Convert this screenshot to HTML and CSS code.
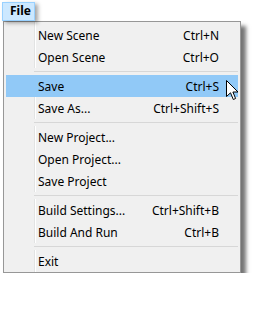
FILE: index.html
```html
<!DOCTYPE html>
<html lang="en">
<head>
  <meta charset="UTF-8" />
  <title>File menu</title>
  <link rel="stylesheet" href="styles.css">
</head>
<body>

<div class="menubar">
  <div class="menu-title">File</div>
</div>

<div class="menu">
  <div class="item"><span>New Scene</span><span class="key">Ctrl+N</span></div>
  <div class="item"><span>Open Scene</span><span class="key">Ctrl+O</span></div>
  <div class="sep"></div>
  <div class="item active"><span>Save</span><span class="key">Ctrl+S</span>
    <svg class="cursor" width="13" height="21" viewBox="0 0 13 21">
      <path d="M0.5 0.5 L0.5 16.5 L4.5 12.8 L7.3 19.5 L9.6 18.5 L6.9 12 L12 12 Z" fill="#fff" stroke="#000" stroke-width="1" stroke-linejoin="miter"/>
    </svg>
  </div>
  <div class="item"><span>Save As...</span><span class="key">Ctrl+Shift+S</span></div>
  <div class="sep"></div>
  <div class="item"><span>New Project...</span></div>
  <div class="item"><span>Open Project...</span></div>
  <div class="item"><span>Save Project</span></div>
  <div class="sep"></div>
  <div class="item"><span>Build Settings...</span><span class="key">Ctrl+Shift+B</span></div>
  <div class="item"><span>Build And Run</span><span class="key">Ctrl+B</span></div>
  <div class="sep"></div>
  <div class="item"><span>Exit</span></div>
</div>

</body>
</html>
```

FILE: styles.css
```css
* {
  margin: 0;
  padding: 0;
  box-sizing: border-box;
}

body {
  font-family: 'Noto Sans', 'Open Sans', sans-serif;
  font-size: 12px;
  color: #000;
  background: #fff;
  padding: 2px 0 0 2px;
}

.menubar {
  display: flex;
}

.menu-title {
  width: 33px;
  height: 19px;
  line-height: 16px;
  padding-left: 7px;
  font-weight: bold;
  background: #cce8ff;
  border: 1px solid #99d1ff;
  box-shadow: 3px 2px 4px rgba(0, 0, 0, 0.35);
  position: relative;
  z-index: 2;
}

.menu {
  width: 238px;
  margin-left: 1px;
  background: #f0f0f0 linear-gradient(to right, transparent 30px, #e2e3e3 30px, #e2e3e3 31px, #fff 31px, #fff 32px, transparent 32px);
  border: 1px solid #979797;
  padding: 2px 2px 0;
  box-shadow: 5px 5px 4px rgba(0, 0, 0, 0.55);
  position: relative;
  z-index: 1;
}

.item {
  display: flex;
  justify-content: space-between;
  align-items: center;
  height: 22px;
  padding: 0 19px 0 32px;
  position: relative;
}

.item.active {
  background: #91c9f7;
}

.sep {
  height: 7px;
  margin-left: 28px;
  background: linear-gradient(#f0f0f0 3px, #d7d7d7 3px, #d7d7d7 4px, #f0f0f0 4px);
}

.cursor {
  position: absolute;
  left: 220px;
  top: 5px;
}
```
